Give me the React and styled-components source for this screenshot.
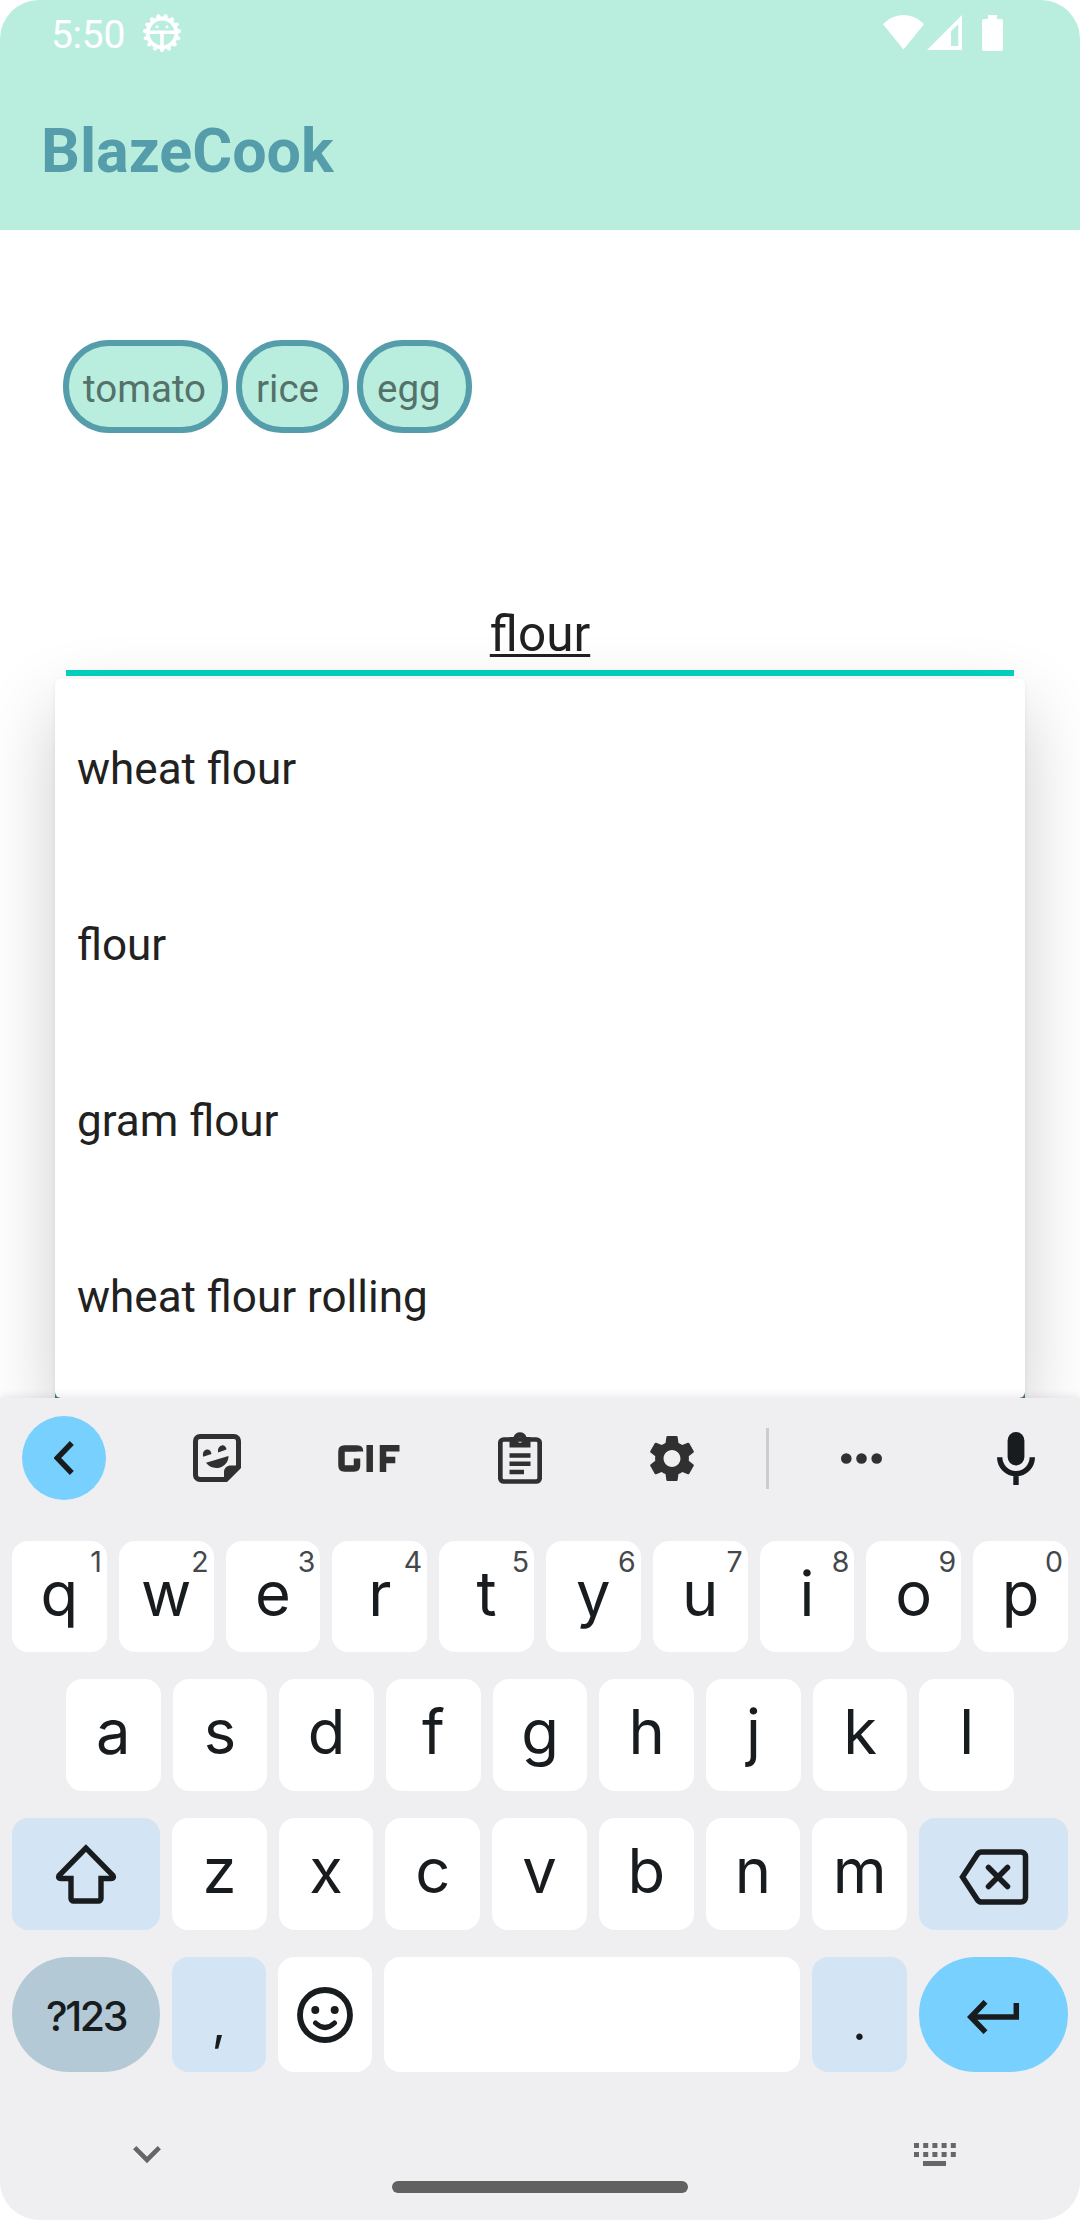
import React from "react";
import styled, { createGlobalStyle, css } from "styled-components";

const Global = createGlobalStyle`
  * { box-sizing: border-box; }
  html, body { margin: 0; padding: 0; background: #fff; }
  svg { display: block; flex: none; }
`;

const ink = "#191c1e";
const tool = "#303030";

const Screen = styled.div`
  width: 1080px;
  height: 2220px;
  display: flex;
  flex-direction: column;
  overflow: hidden;
  border-radius: 39px;
  background: #fff;
  font-family: Roboto, "Liberation Sans", sans-serif;
`;

const Header = styled.header`
  height: 230px;
  flex: none;
  background: #b9eedf;
`;

const StatusBar = styled.div`
  height: 66px;
  display: flex;
  align-items: flex-start;
  padding: 0 77px 0 51px;
  color: #fff;
`;

const Clock = styled.span`
  font-size: 39px;
  line-height: 46px;
  width: 91px;
  padding-top: 12px;
  letter-spacing: -0.3px;
`;

const StatusIcon = styled.svg`
  margin-top: ${(p) => p.$top}px;
  margin-left: ${(p) => p.$left || 0}px;
`;

const Spacer = styled.div`
  flex: 1;
`;

const Title = styled.h1`
  margin: 0;
  padding: 49px 0 0 41px;
  font-size: 61px;
  line-height: 72px;
  font-weight: 700;
  color: #569dab;
`;

const Main = styled.main`
  position: relative;
  height: 1168px;
  flex: none;
  display: flex;
  flex-direction: column;
`;

const Chips = styled.div`
  display: flex;
  gap: 8px;
  padding: 110px 0 0 63px;
`;

const Chip = styled.span`
  width: ${(p) => p.$width}px;
  height: 93px;
  padding-left: 14px;
  border: 6px solid #569dab;
  border-radius: 46px;
  background: #b9eedf;
  color: #54716a;
  font-size: 38.5px;
  line-height: 86px;
`;

const Field = styled.div`
  height: 73px;
  margin: 170px 66px 0;
  border-bottom: 6px solid #03d3bf;
  text-align: center;
  font-size: 49.5px;
  line-height: 63px;
  color: #212121;
`;

const Typed = styled.span`
  text-decoration: underline;
  text-decoration-thickness: 3px;
  text-underline-offset: 3px;
  text-decoration-skip-ink: none;
`;

const SearchButton = styled.div`
  height: 18px;
  margin: auto 55px 0;
  background: #4b8591;
`;

const Suggestions = styled.ul`
  position: absolute;
  top: 449px;
  left: 55px;
  right: 55px;
  height: 719px;
  margin: 0;
  padding: 0;
  list-style: none;
  border-radius: 6px;
  background: #fff;
  box-shadow: 0 30px 74px rgba(0, 0, 0, 0.2), 0 2px 5px rgba(0, 0, 0, 0.06);
`;

const Suggestion = styled.li`
  height: 176px;
  padding: 64px 22px 0;
  font-size: 44px;
  line-height: 52px;
  color: #212121;
`;

const Keyboard = styled.section`
  position: relative;
  flex: 1;
  display: flex;
  flex-direction: column;
  background: #efeff1;
  box-shadow: 0 -2px 9px rgba(0, 0, 0, 0.09);
`;

const Toolbar = styled.div`
  height: 143px;
  display: flex;
  align-items: center;
  padding: 0 43px 23px 22px;
`;

const BackButton = styled.div`
  width: 84px;
  height: 84px;
  border-radius: 50%;
  background: #78d0ff;
  display: grid;
  place-items: center;
`;

const ToolIcon = styled.div`
  margin-left: ${(p) => p.$gap}px;
`;

const Divider = styled.div`
  width: 3px;
  height: 61px;
  margin-left: 71px;
  background: #cbccce;
`;

const Keys = styled.div`
  display: flex;
  flex-direction: column;
  gap: 27px;
  padding: 0 12px;
`;

const Row = styled.div`
  display: flex;
  gap: 12px;
  height: ${(p) => p.$height || 112}px;
  padding: 0 ${(p) => p.$inset || 0}px;
`;

const tones = {
  plain: "#ffffff",
  soft: "#d3e5f4",
  slate: "#b4c9d6",
  bright: "#78d0ff",
};

const Key = styled.div`
  position: relative;
  flex: ${(p) => (p.$width ? `0 0 ${p.$width}px` : "1 1 0")};
  display: flex;
  justify-content: center;
  align-items: ${(p) => (p.$icon ? "center" : "flex-start")};
  border-radius: 16px;
  background: ${(p) => tones[p.$tone || "plain"]};
  color: ${ink};
  font-family: Inter, Roboto, sans-serif;
  font-size: ${(p) => (p.$mark ? 50 : 61.5)}px;
  line-height: 74px;
  padding-top: ${(p) => p.$top || 0}px;
  ${(p) =>
    p.$pill &&
    css`
      border-radius: 57px;
      font-size: 41px;
      font-weight: 500;
      letter-spacing: -2.4px;
      line-height: 48px;
    `}
`;

const Hint = styled.span`
  position: absolute;
  top: 4px;
  right: 5px;
  font-family: Inter, Roboto, sans-serif;
  font-size: 28.5px;
  line-height: 34px;
  font-weight: 400;
  color: #45484b;
`;

const NavBar = styled.div`
  flex: 1;
  display: flex;
  align-items: flex-start;
  padding: 71px 124px 0 133px;
`;

const HomeHandle = styled.div`
  width: 297px;
  height: 12px;
  margin: 38px 226px 0 231px;
  border-radius: 6px;
  background: #616161;
`;

const DebugIcon = () => {
  const teeth = Array.from({ length: 15 }, (_, i) => (i * 24 + 90) * (Math.PI / 180));
  return (
    <StatusIcon $top={13} width="40" height="40" viewBox="-20 -20 40 40">
      <circle r="14.4" fill="none" stroke="#fff" strokeWidth="4" />
      {teeth.map((a) => (
        <circle key={a} cx={Math.cos(a) * 17} cy={Math.sin(a) * 17} r="2.1" fill="#fff" />
      ))}
      <path d="M-14-.8h28M0-1v15" stroke="#fff" strokeWidth="3.6" fill="none" />
      <circle cx="-5" cy="-6.2" r="1.5" fill="#fff" />
      <circle cx="5" cy="-6.2" r="1.5" fill="#fff" />
    </StatusIcon>
  );
};

const WifiIcon = () => (
  <StatusIcon $top={15} width="41" height="35" viewBox="0 0 41 35">
    <path d="M0 9.3C5.5 3.5 12.5 0 20.5 0S35.500 3.500 41 9.300L20.500 34.500z" fill="#fff" />
  </StatusIcon>
);

const SignalIcon = () => (
  <StatusIcon $top={15} $left={3} width="35" height="35" viewBox="0 0 35 35">
    <path fillRule="evenodd" d="M35 0v35H0zM31.300 9l-7.300 7.300V31h7.300z" fill="#fff" />
  </StatusIcon>
);

const BatteryIcon = () => (
  <StatusIcon $top={15} $left={20} width="21" height="36" viewBox="0 0 21 36">
    <path d="M6 0h9v4h4a2 2 0 0 1 2 2v28a2 2 0 0 1-2 2H2a2 2 0 0 1-2-2V6a2 2 0 0 1 2-2h4z" fill="#fff" />
  </StatusIcon>
);

const StickerIcon = () => (
  <svg width="48" height="48" viewBox="0 0 48 48">
    <path d="M7 2.500h34a4.500 4.500 0 0 1 4.500 4.500v26L33 45.500H7A4.500 4.500 0 0 1 2.500 41V7A4.500 4.500 0 0 1 7 2.500z" fill="none" stroke={tool} strokeWidth="5" />
    <path d="M31 47V38c0-4 3-6.500 7-6.500h9v3L34.500 47z" fill={tool} />
    <path d="M10.200 22.800c-1-4 .8-6.800 3.700-7.300 2.500-.3 4.300 1.400 4.600 4.600zM25.200 18.500c-.8-4 1-6.600 3.700-7.100 2.500-.3 4.300 1.400 4.600 4.200zM13 28.800L35.500 22c0 6-4 11-10.500 11.900-5 .5-9-1.200-12-5.100z" fill={tool} />
  </svg>
);

const GifIcon = () => (
  <svg width="62" height="27" viewBox="0 0 62 27">
    <path d="M22 6.500q0-3-3-3H6.500q-3 0-3 3v14q0 3 3 3H16q3 0 3-3V13.500" fill="none" stroke={tool} strokeWidth="6.500" />
    <path d="M31.700 0v27M45 27V3.300h16.500M45 15h12.300" fill="none" stroke={tool} strokeWidth="6.500" />
  </svg>
);

const ClipboardIcon = () => (
  <svg width="44" height="52" viewBox="0 0 44 52">
    <rect x="2.300" y="7.500" width="39.400" height="42" rx="3.500" fill="none" stroke={tool} strokeWidth="4.700" />
    <path fillRule="evenodd" d="M11.500 15.500V5h4C16.500 2 19 .3 22 .3S27.500 2 28.500 5h4v10.500zM22 5.500a2.600 2.600 0 1 0 .01 0z" fill={tool} />
    <path d="M11.500 23.500h21M11.500 31.800h21M11.500 40H26" stroke={tool} strokeWidth="4.400" />
  </svg>
);

const GearIcon = () => (
  <svg width="46" height="47" viewBox="2.200 2 19.600 20">
    <path
      fill={tool}
      d="M19.140 12.940c.04-.3.06-.61.06-.94 0-.32-.02-.64-.07-.94l2.030-1.580c.18-.14.23-.41.12-.61l-1.920-3.320c-.12-.22-.37-.29-.59-.22l-2.390.96c-.5-.38-1.030-.7-1.620-.94l-.36-2.540c-.04-.24-.24-.41-.48-.41h-3.840c-.24 0-.43.17-.47.41l-.36 2.540c-.59.24-1.130.57-1.620.94l-2.390-.96c-.22-.08-.47 0-.59.22L2.740 8.870c-.12.21-.08.47.12.61l2.030 1.580c-.05.3-.09.63-.09.94s.02.64.07.94l-2.030 1.580c-.18.14-.23.41-.12.61l1.920 3.320c.12.22.37.29.59.22l2.390-.96c.5.38 1.030.7 1.620.94l.36 2.540c.05.24.24.41.48.41h3.840c.24 0 .44-.17.47-.41l.36-2.540c.59-.24 1.130-.56 1.620-.94l2.390.96c.22.08.47 0 .59-.22l1.920-3.320c.12-.22.07-.47-.12-.61l-2.010-1.580zM12 15.600c-1.980 0-3.600-1.620-3.600-3.600s1.620-3.600 3.600-3.600 3.600 1.620 3.600 3.600-1.620 3.600-3.600 3.600z"
    />
  </svg>
);

const DotsIcon = () => (
  <svg width="41" height="11" viewBox="0 0 41 11">
    <circle cx="5.300" cy="5.500" r="5.300" fill={tool} />
    <circle cx="20.500" cy="5.500" r="5.300" fill={tool} />
    <circle cx="35.700" cy="5.500" r="5.300" fill={tool} />
  </svg>
);

const MicIcon = () => (
  <svg width="38" height="53" viewBox="0 0 38 53">
    <rect x="10.600" y="0" width="16.800" height="33.500" rx="8.400" fill={ink} />
    <path d="M2.700 25.300a16.300 16.300 0 0 0 32.600 0M19 42v11" fill="none" stroke={ink} strokeWidth="5.400" />
  </svg>
);

const ShiftIcon = () => (
  <svg width="62" height="60" viewBox="0 0 62 60">
    <path d="M31 4L4 31.500Q2.500 34.500 6 34.500H16V54.500a2.500 2.500 0 0 0 2.500 2.500h25a2.500 2.500 0 0 0 2.500-2.500V34.500H56Q59.500 34.500 58 31.500z" fill="none" stroke={ink} strokeWidth="5.400" />
  </svg>
);

const BackspaceIcon = () => (
  <svg width="70" height="56" viewBox="0 0 70 56">
    <path d="M3.500 28L18.500 5Q20 3 22.500 3H62a4.500 4.500 0 0 1 4.500 4.500v41A4.500 4.500 0 0 1 62 53H22.500Q20 53 18.500 51z" fill="none" stroke={ink} strokeWidth="5.500" />
    <path d="M29.500 18.500l19 19M48.500 18.500l-19 19" stroke={ink} strokeWidth="5.500" strokeLinecap="round" />
  </svg>
);

const SmileIcon = () => (
  <svg width="56" height="56" viewBox="0 0 56 56">
    <circle cx="28" cy="28" r="25" fill="none" stroke={ink} strokeWidth="5.800" />
    <circle cx="18.300" cy="23" r="4" fill={ink} />
    <circle cx="37.700" cy="23" r="4" fill={ink} />
    <path d="M18.500 36q9.500 9 19 0" fill="none" stroke={ink} strokeWidth="5" strokeLinecap="round" />
  </svg>
);

const EnterIcon = () => (
  <svg width="53" height="34" viewBox="0 0 53 34">
    <path d="M4 17h45.300V3M18.500 1.800L3.800 17l14.700 15.200" fill="none" stroke={ink} strokeWidth="5.500" />
  </svg>
);

const KeyboardIcon = () => (
  <svg width="42" height="23" viewBox="0 0 42 23">
    <path d="M0 2.500h42M0 11.500h42" stroke="#666" strokeWidth="5" strokeDasharray="5 4.200" />
    <path d="M9 20.500h23" stroke="#666" strokeWidth="5" />
  </svg>
);

const topRow = "qwertyuiop".split("");
const chips = [
  { name: "tomato", width: 165 },
  { name: "rice", width: 113 },
  { name: "egg", width: 115 },
];
const options = ["wheat flour", "flour", "gram flour", "wheat flour rolling"];

export default function App() {
  return (
    <>
      <Global />
      <Screen>
        <Header>
          <StatusBar>
            <Clock>5:50</Clock>
            <DebugIcon />
            <Spacer />
            <WifiIcon />
            <SignalIcon />
            <BatteryIcon />
          </StatusBar>
          <Title>BlazeCook</Title>
        </Header>
        <Main>
          <Chips>
            {chips.map((c) => (
              <Chip key={c.name} $width={c.width}>{c.name}</Chip>
            ))}
          </Chips>
          <Field><Typed>flour</Typed></Field>
          <SearchButton />
          <Suggestions>
            {options.map((o) => <Suggestion key={o}>{o}</Suggestion>)}
          </Suggestions>
        </Main>
        <Keyboard>
          <Toolbar>
            <BackButton>
              <svg width="20" height="34" viewBox="0 0 20 34">
                <path d="M17.800 2L3.300 17l14.500 15" fill="none" stroke={ink} strokeWidth="5.500" />
              </svg>
            </BackButton>
            <ToolIcon $gap={87}><StickerIcon /></ToolIcon>
            <ToolIcon $gap={97}><GifIcon /></ToolIcon>
            <ToolIcon $gap={98}><ClipboardIcon /></ToolIcon>
            <ToolIcon $gap={107}><GearIcon /></ToolIcon>
            <Divider />
            <ToolIcon $gap={72}><DotsIcon /></ToolIcon>
            <ToolIcon $gap={115}><MicIcon /></ToolIcon>
          </Toolbar>
          <Keys>
            <Row $height={111}>
              {topRow.map((k, i) => (
                <Key key={k} $top={16}>
                  {k}
                  <Hint>{(i + 1) % 10}</Hint>
                </Key>
              ))}
            </Row>
            <Row $inset={54}>
              {"asdfghjkl".split("").map((k) => <Key key={k} $top={16}>{k}</Key>)}
            </Row>
            <Row>
              <Key $width={148} $tone="soft" $icon><ShiftIcon /></Key>
              {"zxcvbnm".split("").map((k) => <Key key={k} $top={16}>{k}</Key>)}
              <Key $width={149} $tone="soft" $icon $top={5}><BackspaceIcon /></Key>
            </Row>
            <Row $height={115}>
              <Key $width={148} $tone="slate" $pill $top={35}>?123</Key>
              <Key $width={94} $tone="soft" $mark $top={28}>,</Key>
              <Key $width={94} $icon><SmileIcon /></Key>
              <Key />
              <Key $width={95} $tone="soft" $mark $top={28}>.</Key>
              <Key $width={149} $tone="bright" $pill $icon $top={5}><EnterIcon /></Key>
            </Row>
          </Keys>
          <NavBar>
            <StatusIcon $top={3} width="28" height="18" viewBox="0 0 28 18">
              <path d="M1.700 1.700L14 14l12.300-12.300" fill="none" stroke="#666" strokeWidth="4.600" />
            </StatusIcon>
            <HomeHandle />
            <KeyboardIcon />
          </NavBar>
        </Keyboard>
      </Screen>
    </>
  );
}
